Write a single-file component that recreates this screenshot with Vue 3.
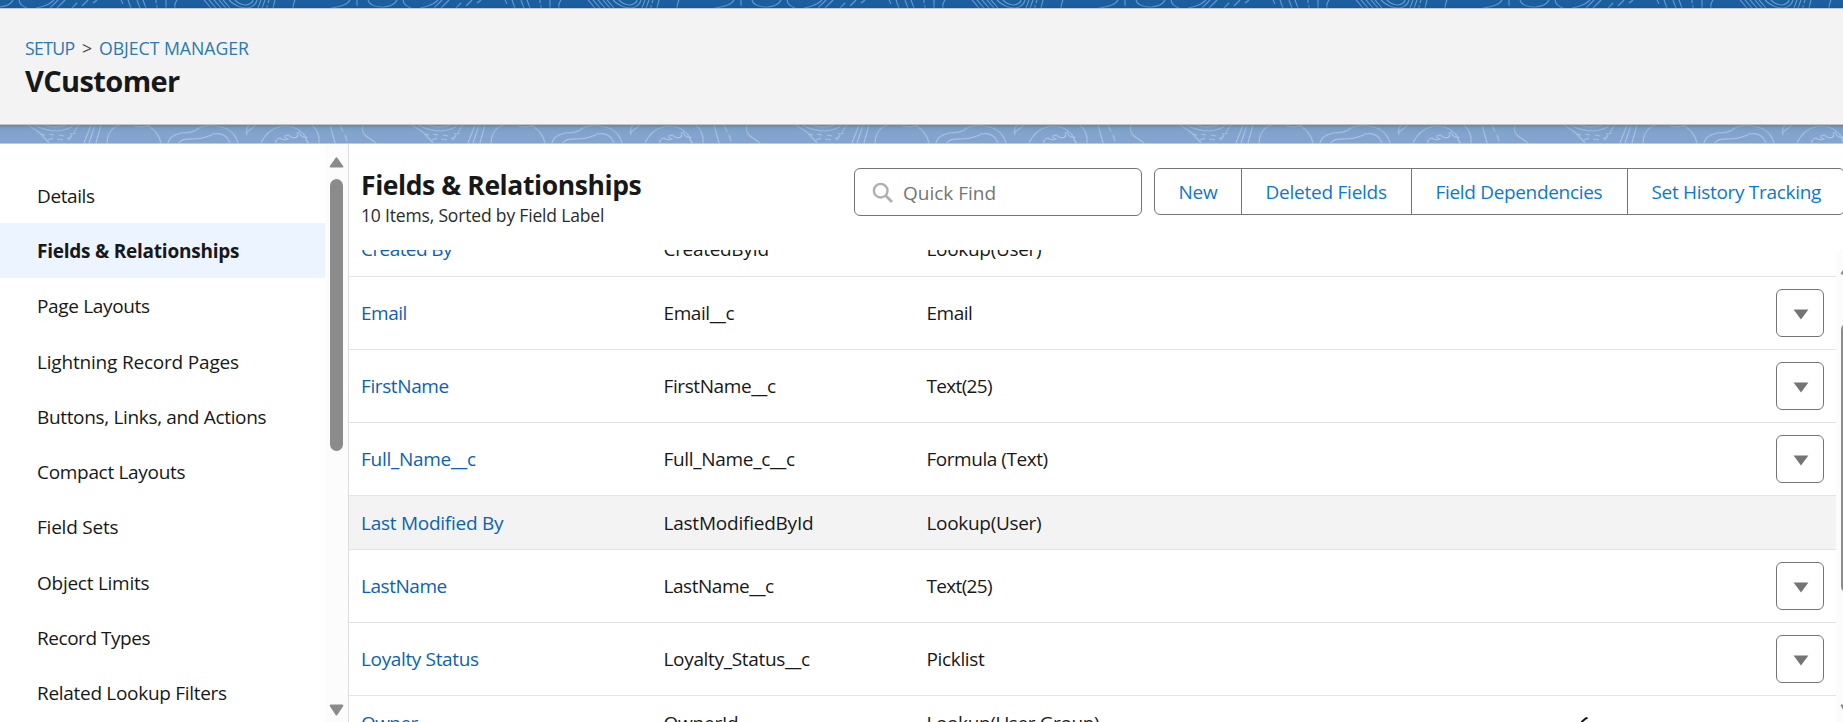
<script setup>
// Fields and relationships page of the object manager.
// Every label carries its drawn width; v-fit spreads the letters to that width.
const canvas = document.createElement('canvas')
const ctx = canvas.getContext('2d')

const vFit = {
  mounted(el, { value }) {
    const text = el.textContent.trim()
    const cs = getComputedStyle(el)
    ctx.font = `${cs.fontWeight} ${cs.fontSize} ${cs.fontFamily}`
    const m = ctx.measureText(text)
    const ink = m.actualBoundingBoxRight + m.actualBoundingBoxLeft
    if (text.length > 1) {
      el.style.letterSpacing = `${(value - ink) / (text.length - 1)}px`
    }
  }
}

const nav = [
  { t: 'Details', w: 57 },
  { t: 'Fields & Relationships', w: 201, active: true },
  { t: 'Page Layouts', w: 112 },
  { t: 'Lightning Record Pages', w: 201 },
  { t: 'Buttons, Links, and Actions', w: 228.5 },
  { t: 'Compact Layouts', w: 147.5 },
  { t: 'Field Sets', w: 80.5 },
  { t: 'Object Limits', w: 111.5 },
  { t: 'Record Types', w: 112.5 },
  { t: 'Related Lookup Filters', w: 189 }
]

const rows = [
  { c: [['Created By', 91], ['CreatedById', 103], ['Lookup(User)', 113.5]], short: true, first: true },
  { c: [['Email', 44.5], ['Email__c', 70], ['Email', 44.5]] },
  { c: [['FirstName', 86.5], ['FirstName__c', 111.5], ['Text(25)', 65.5]] },
  { c: [['Full_Name__c', 114], ['Full_Name_c__c', 130.5], ['Formula (Text)', 120]] },
  { c: [['Last Modified By', 142], ['LastModifiedById', 147.5], ['Lookup(User)', 113.5]], short: true, hover: true },
  { c: [['LastName', 84.5], ['LastName__c', 109.5], ['Text(25)', 65.5]] },
  { c: [['Loyalty Status', 117], ['Loyalty_Status__c', 145.5], ['Picklist', 57.5]] },
  { c: [['Owner', 56.5], ['OwnerId', 72.5], ['Lookup(User,Group)', 171.5]], short: true }
]

const actions = [
  { t: 'New', w: 38.5, box: 86 },
  { t: 'Deleted Fields', w: 120.5, box: 170 },
  { t: 'Field Dependencies', w: 166, box: 216 },
  { t: 'Set History Tracking', w: 169.5, box: 217 }
]
</script>

<template>
  <div class="page">
    <svg class="band" width="1843" height="8">
      <defs>
        <pattern id="topo-dark" width="384" height="8" patternUnits="userSpaceOnUse">
          <g fill="none" stroke="#6a9bca" stroke-width="1.1">
            <path d="M331 8Q347 6 350 0M357 0v6M368 0Q369 6 380 7Q394 7 397 0M-16 0Q-15 6 -4 7Q10 7 13 0M19 0Q20 6 27 8M36 8Q48 6 54 0M50 8L58 0M57 8L65 0M72 8L77 3M82 6L88 0M93 3L97 0" />
            <path d="M121 0l2 4M128 0l3 8M137 0l3 8M143 0l3 8M156 0v3M157 5v3M166 0v8M177 0Q174 4 175 8M204 0l7 8M209 0l7 8M214 0l7 8M219 0l7 8M223 0l7 8M229 0Q237 8 247 8Q255 7 257 0M235 0Q240 5 246 5Q252 4 253 0M261 0l-3 8M265 0l-3 8M269 0l-1 3M267 5v3M275 0l-2 8M295 0Q293 4 293 8" />
          </g>
        </pattern>
        <linearGradient id="dark-shade" x1="0" y1="0" x2="0" y2="1">
          <stop offset=".5" stop-color="#1b5f9f" stop-opacity="0" />
          <stop offset="1" stop-color="#154f86" stop-opacity=".35" />
        </linearGradient>
      </defs>
      <rect width="1843" height="8" fill="#1b5f9f" />
      <rect width="1843" height="8" fill="url(#topo-dark)" />
      <rect width="1843" height="8" fill="url(#dark-shade)" />
    </svg>

    <header class="header">
      <nav class="crumbs">
        <a v-fit="49.5">SETUP</a>
        <span class="sep">&gt;</span>
        <a v-fit="149">OBJECT MANAGER</a>
      </nav>
      <h1><span v-fit="155">VCustomer</span></h1>
    </header>

    <svg class="band" width="1843" height="18">
      <defs>
        <pattern id="topo-light" width="384" height="18" patternUnits="userSpaceOnUse">
          <g fill="none" stroke="#a9c2e1" stroke-width="1.2">
            <path d="M28 0L40 8L49 18M35 0Q45 6 57 6Q69 5 73 0M44 0Q55 4 67 0M41 9l4 1M49 9l5 1M59 10l5 1M70 9l6 -1M48 15l5 -2M57 14l6 1M67 14l4 -2M79 0l-5 7M72 10l-3 5M91 0l-7 18M95 0l-6 18M101 0l-5 18" />
            <path d="M107 18Q108 3 120 0M146 0Q158 5 161 18M134 1Q143 3 151 0M168 18Q169 11 181 8Q194 8 199 3Q206 -1 216 1Q234 3 238 18M179 18Q182 13 194 14Q207 13 213 9Q226 7 230 18M249 0Q245 5 247 10M246 8Q251 4 256 0M261 18Q267 4 283 1Q303 1 308 18M276 18Q275 14 280 13Q284 16 288 14Q281 11 288 10Q294 15 298 11Q296 8 299 7Q302 14 307 12Q304 15 309 18M312 0Q320 7 319 18M330 0L335 18M340 0l3 7M345 10l2 6M363 0Q361 7 366 11L376 18" />
          </g>
        </pattern>
        <linearGradient id="light-shade" x1="0" y1="0" x2="0" y2="1">
          <stop offset="0" stop-color="#4f7093" stop-opacity=".6" />
          <stop offset=".2" stop-color="#6288b3" stop-opacity=".25" />
          <stop offset=".6" stop-color="#7fa3cd" stop-opacity="0" />
        </linearGradient>
      </defs>
      <rect width="1843" height="18" fill="#82a4cf" />
      <rect width="1843" height="18" fill="url(#topo-light)" />
      <rect width="1843" height="18" fill="url(#light-shade)" />
    </svg>

    <div class="body">
      <aside class="side">
        <div v-for="n in nav" :key="n.t" class="item" :class="{ active: n.active }">
          <span v-fit="n.w">{{ n.t }}</span>
        </div>
      </aside>
      <div class="track">
        <svg width="15" height="11" viewBox="0 0 15 11"><path d="M7.5 1.2L13.3 9.6H1.7z" fill="#8b8b8b" stroke="#8b8b8b" stroke-width="2" stroke-linejoin="round" /></svg>
        <div class="thumb"></div>
        <svg class="down" width="15" height="12" viewBox="0 0 15 12"><path d="M7.5 10.4L13.3 1.6H1.7z" fill="#8b8b8b" stroke="#8b8b8b" stroke-width="2" stroke-linejoin="round" /></svg>
      </div>

      <main class="main">
        <div class="head">
          <div class="titles">
            <h2><span v-fit="278.5">Fields &amp; Relationships</span></h2>
            <p><span v-fit="241">10 Items, Sorted by Field Label</span></p>
          </div>
          <div class="search">
            <svg width="22" height="22" viewBox="0 0 22 22" fill="none" stroke="#b0b0b0">
              <circle cx="8.7" cy="8.7" r="6.8" stroke-width="2.4" />
              <path d="M13.6 13.6L20 20" stroke-width="2.8" />
            </svg>
            <span v-fit="90.5">Quick Find</span>
          </div>
          <div class="actions">
            <div v-for="a in actions" :key="a.t" class="btn" :style="{ width: a.box + 'px' }">
              <span v-fit="a.w">{{ a.t }}</span>
            </div>
          </div>
        </div>

        <div class="scroller">
          <div class="rows">
            <div v-for="(r, i) in rows" :key="i" class="row" :class="{ short: r.short, hover: r.hover, first: r.first }">
              <a><span v-fit="r.c[0][1]">{{ r.c[0][0] }}</span></a>
              <div><span v-fit="r.c[1][1]">{{ r.c[1][0] }}</span></div>
              <div><span v-fit="r.c[2][1]">{{ r.c[2][0] }}</span></div>
              <div v-if="!r.short" class="menu">
                <svg width="16" height="11" viewBox="0 0 16 11"><path d="M.6 .6H15.4L8 10.4z" fill="#747474" /></svg>
              </div>
            </div>
          </div>
          <div class="rtrack">
            <svg width="15" height="11" viewBox="0 0 15 11"><path d="M7.5 1.2L13.3 9.6H1.7z" fill="#8b8b8b" stroke="#8b8b8b" stroke-width="2" stroke-linejoin="round" /></svg>
            <div class="rthumb"></div>
            <svg class="down" width="15" height="12" viewBox="0 0 15 12"><path d="M7.5 10.4L13.3 1.6H1.7z" fill="#8b8b8b" stroke="#8b8b8b" stroke-width="2" stroke-linejoin="round" /></svg>
          </div>
        </div>
      </main>
    </div>
    <svg class="pointer" width="8" height="5" viewBox="0 0 8 5"><path d="M0 5.5L4.5 1.6L6.5 .8" fill="none" stroke="#111" stroke-width="2" /></svg>
  </div>
</template>

<style>
body {
  overflow: hidden;
  background: #fff;
}
</style>

<style scoped>
.page {
  position: relative;
  width: 1843px;
  height: 722px;
  overflow: hidden;
  display: flex;
  flex-direction: column;
  background: #fff;
  color: #181818;
  font-family: "Open Sans", "Noto Sans", sans-serif;
  font-size: 19px;
  white-space: nowrap;
  font-kerning: normal;
  font-variant-ligatures: none;
}
.band {
  display: block;
  flex: none;
}
.header {
  box-sizing: border-box;
  flex: none;
  height: 117px;
  padding: 27px 0 0 25px;
  background: #f3f3f3;
  border-top: 1px solid #c9c9c9;
  border-bottom: 1px solid #c4c4c4;
}
.crumbs {
  display: flex;
  height: 24px;
  line-height: 24px;
  font-size: 17.7px;
  color: #2a7ab0;
}
.sep {
  width: 17px;
  margin-left: 7.5px;
  color: #444;
}
h1 {
  margin: 3px 0 0;
  line-height: 36px;
  font-size: 29px;
  font-weight: 700;
}
.body {
  box-sizing: border-box;
  flex: none;
  display: flex;
  height: 579px;
  border-top: 1px solid #c4c8cf;
}
.side {
  box-sizing: border-box;
  flex: none;
  width: 325px;
  padding-top: 23.75px;
}
.item {
  box-sizing: border-box;
  height: 55.25px;
  padding: 1px 0 0 37px;
  line-height: 55.25px;
}
.item.active {
  background: #ebf4ff;
  font-weight: 700;
}
.track {
  box-sizing: border-box;
  flex: none;
  width: 23px;
  padding: 12.5px 0 6px 4px;
  display: flex;
  flex-direction: column;
  background: #fcfcfc;
}
.track svg,
.rtrack svg {
  display: block;
  flex: none;
}
.thumb {
  width: 13px;
  height: 272px;
  margin: 11.5px 0 0 1px;
  border-radius: 7px;
  background: #8b8b8b;
}
.track .down,
.rtrack .down {
  margin-top: auto;
}
.main {
  flex: 1;
  min-width: 0;
  display: flex;
  flex-direction: column;
  overflow: hidden;
  border-left: 1px solid #dcdcdc;
}
.head {
  box-sizing: border-box;
  flex: none;
  display: flex;
  height: 106px;
  padding: 24px 0 0 12px;
}
.titles {
  flex: none;
  width: 493px;
}
h2 {
  margin: 0;
  line-height: 34px;
  font-size: 26.5px;
  font-weight: 700;
}
p {
  margin: 1px 0 0;
  line-height: 24px;
  font-size: 17.5px;
  color: #2b2b2b;
}
.search {
  box-sizing: border-box;
  flex: none;
  width: 288px;
  height: 48px;
  padding: 1px 0 0 17px;
  display: flex;
  align-items: center;
  gap: 9px;
  border: 1px solid #747474;
  border-radius: 6px;
  color: #757575;
}
.actions {
  flex: none;
  display: flex;
  height: 47px;
  margin-left: 12px;
  box-sizing: border-box;
  border: 1px solid #747474;
  border-radius: 6px;
  color: #0b78d1;
}
.btn {
  box-sizing: border-box;
  flex: none;
  padding-left: 23.5px;
  line-height: 46px;
}
.btn + .btn {
  border-left: 1px solid #747474;
}
.scroller {
  flex: 1;
  min-height: 0;
  display: flex;
  overflow: hidden;
}
.rows {
  flex: none;
  width: 1487px;
  margin-top: -27px;
}
.row {
  box-sizing: border-box;
  height: 73px;
  padding: 0 12px;
  display: grid;
  grid-template-columns: 302.5px 263px 1fr 48px;
  align-items: center;
  border-bottom: 1px solid #e3e3e3;
}
.row.short {
  height: 54px;
}
.row.first {
  padding-bottom: 2px;
}
.row.hover {
  background: #f3f3f3;
}
.row a {
  color: #0b62b5;
}
.menu {
  box-sizing: border-box;
  width: 48px;
  height: 48px;
  display: flex;
  align-items: center;
  justify-content: center;
  border: 1px solid #747474;
  border-radius: 6px;
}
.menu svg {
  margin: 2px 0 0 1px;
}
.rtrack {
  box-sizing: border-box;
  flex: none;
  width: 23px;
  padding: 14px 0 6px 4px;
  display: flex;
  flex-direction: column;
  background: #fcfcfc;
}
.rthumb {
  width: 13px;
  height: 270px;
  margin: 48px 0 0 1px;
  border-radius: 7px;
  background: #8b8b8b;
}
.pointer {
  position: absolute;
  left: 1581px;
  top: 717px;
}
</style>
